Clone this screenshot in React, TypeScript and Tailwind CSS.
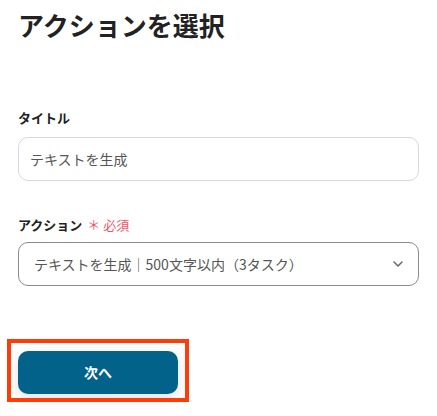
import { ChevronDown } from 'lucide-react';

export default function App() {
  const font = { fontFamily: '"Noto Sans CJK JP", "Noto Sans", sans-serif' };

  return (
    <div className="w-[437px] h-[416px] bg-white overflow-hidden px-[18px]" style={font}>
      {/* 見出し */}
      <h1 className="pt-[6px] text-[26px] leading-[38px] font-bold text-[#222]">アクションを選択</h1>

      {/* タイトル */}
      <div className="mt-[64px]">
        <label className="block text-[13px] leading-[20px] font-bold text-[#222]">タイトル</label>
        <div className="mt-[9px] h-[44px] rounded-[10px] border border-[#d5d8de] flex items-center px-[11px]">
          <span className="text-[14px] text-[#555]">テキストを生成</span>
        </div>
      </div>

      {/* アクション */}
      <div className="mt-[34px]">
        <label className="flex items-center text-[13px] leading-[20px] font-bold text-[#222]">
          アクション
          <span className="ml-[5px] font-normal text-[#f0566a]">＊ 必須</span>
        </label>
        <div className="mt-[7px] h-[44px] rounded-[10px] border border-[#8a8a8a] flex items-center justify-between pl-[15px] pr-[12px]">
          <span className="text-[14px] text-[#555]">テキストを生成｜500文字以内（3タスク）</span>
          <ChevronDown size={16} strokeWidth={2.2} className="text-[#666]" />
        </div>
      </div>

      {/* 次へ */}
      <div className="mt-[65px] relative w-[160px]">
        <button className="w-[160px] h-[43px] rounded-[10px] bg-[#02628a] text-white text-[14px] font-bold shadow-[0_4px_14px_rgba(0,0,0,0.12)]">
          次へ
        </button>
        <div className="absolute left-[-11px] top-[-12px] w-[182px] h-[63px] border-[4px] border-[#ff3b0a]" />
      </div>
    </div>
  );
}
